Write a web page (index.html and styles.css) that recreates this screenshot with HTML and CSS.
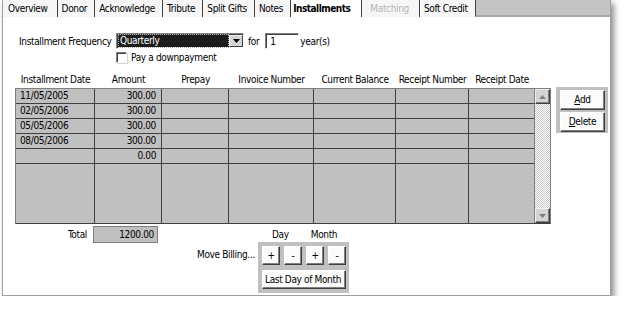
FILE: index.html
```html
<!DOCTYPE html>
<html>
<head>
<meta charset="utf-8">
<title>Installments</title>
<link rel="stylesheet" href="styles.css">
</head>
<body>
<div class="window">
  <div class="tabs">
    <div class="tab">Overview</div>
    <div class="tab">Donor</div>
    <div class="tab">Acknowledge</div>
    <div class="tab">Tribute</div>
    <div class="tab">Split Gifts</div>
    <div class="tab">Notes</div>
    <div class="tab active">Installments</div>
    <div class="tab disabled">Matching</div>
    <div class="tab">Soft Credit</div>
    <div class="tab-fill"></div>
  </div>
  <div class="content">
    <div class="freq-row">
      <span class="freq-label">Installment Frequency</span>
      <div class="select">
        <span class="select-val"><span class="focus">Quarterly</span></span>
        <span class="select-btn"><svg width="7" height="4" viewBox="0 0 7 4"><path d="M0 0h7L3.5 4z" fill="#000"/></svg></span>
      </div>
      <span class="for-label">for</span>
      <div class="textbox">1</div>
      <span>year(s)</span>
    </div>
    <div class="check-row">
      <span class="checkbox"></span>
      <span>Pay a downpayment</span>
    </div>
    <div class="grid-area">
      <div class="grid-col">
        <div class="grid-head">
          <span>Installment Date</span>
          <span>Amount</span>
          <span>Prepay</span>
          <span>Invoice Number</span>
          <span>Current Balance</span>
          <span>Receipt Number</span>
          <span>Receipt Date</span>
        </div>
        <div class="grid">
          <div class="cells">
            <div class="c date">11/05/2005</div><div class="c num">300.00</div><div class="c"></div><div class="c"></div><div class="c"></div><div class="c"></div><div class="c last"></div>
            <div class="c date">02/05/2006</div><div class="c num">300.00</div><div class="c"></div><div class="c"></div><div class="c"></div><div class="c"></div><div class="c last"></div>
            <div class="c date">05/05/2006</div><div class="c num">300.00</div><div class="c"></div><div class="c"></div><div class="c"></div><div class="c"></div><div class="c last"></div>
            <div class="c date">08/05/2006</div><div class="c num">300.00</div><div class="c"></div><div class="c"></div><div class="c"></div><div class="c"></div><div class="c last"></div>
            <div class="c date"></div><div class="c num">0.00</div><div class="c"></div><div class="c"></div><div class="c"></div><div class="c"></div><div class="c last"></div>
            <div class="c fill"></div><div class="c fill"></div><div class="c fill"></div><div class="c fill"></div><div class="c fill"></div><div class="c fill"></div><div class="c fill last"></div>
          </div>
          <div class="scrollbar">
            <span class="sb-btn"><svg width="7" height="4" viewBox="0 0 7 4"><path d="M3.5 0L7 4H0z" fill="#808080"/></svg></span>
            <span class="sb-track"></span>
            <span class="sb-btn"><svg width="7" height="4" viewBox="0 0 7 4"><path d="M0 0h7L3.5 4z" fill="#808080"/></svg></span>
          </div>
        </div>
      </div>
      <div class="side-panel">
        <button class="btn side-btn"><u>A</u>dd</button>
        <button class="btn side-btn"><u>D</u>elete</button>
      </div>
    </div>
    <div class="bottom">
      <div class="total">
        <span class="total-label">Total</span>
        <div class="total-box">1200.00</div>
      </div>
      <div class="billing">
        <span class="billing-label">Move Billing...</span>
        <div class="billing-col">
          <div class="billing-heads"><span>Day</span><span>Month</span></div>
          <div class="billing-panel">
            <div class="pm-row">
              <button class="btn pm">+</button>
              <button class="btn pm">-</button>
              <button class="btn pm">+</button>
              <button class="btn pm">-</button>
            </div>
            <button class="btn last-day">Last Day of Month</button>
          </div>
        </div>
      </div>
    </div>
  </div>
</div>
</body>
</html>
```
FILE: styles.css
```css
* { box-sizing: border-box; }
body {
  margin: 0;
  background: #fff;
  font-family: "DejaVu Sans Condensed", "DejaVu Sans", sans-serif;
  font-size: 10px;
  letter-spacing: -0.35px;
  color: #000;
  white-space: nowrap;
}
.window {
  margin-left: 2px;
  width: 609px;
  height: 296px;
  border-left: 1px solid #a0a0a0;
  border-right: 1px solid #a0a0a0;
  border-bottom: 1px solid #a0a0a0;
  background: #fff;
  box-shadow: 3px 3px 6px rgba(0,0,0,0.45);
}
.tabs {
  display: flex;
  height: 17px;
}
.tab {
  background: #f6f6f6;
  border-left: 1px solid #404040;
  padding: 3px 7px 0 4px;
  line-height: 12px;
}
.tab:first-child { border-left: none; padding-left: 5px; padding-right: 9px; }
.tab.active { font-weight: bold; background: #fff; padding-left: 2px; padding-right: 11px; letter-spacing: -0.5px; }
.tab.disabled { color: #b4b4b4; padding-left: 8px; padding-right: 10px; }
.tab-fill {
  flex: 1;
  background: #c3c3c3;
  border-left: 1px solid #404040;
  border-bottom: 2px solid #a8a8a8;
}
.content { padding: 16px 0 0 12px; }
.freq-row {
  display: flex;
  align-items: center;
  margin-left: 4px;
  height: 16px;
}
.freq-label { width: 97px; }
.select {
  display: flex;
  width: 128px;
  height: 16px;
  border: 1px solid;
  border-color: #808080 #fff #fff #808080;
  box-shadow: inset 1px 1px #404040;
  background: #fff;
}
.select-val {
  flex: 1;
  background: #1c1c1c;
  margin: 1px 0 1px 1px;
  padding: 0 1px;
  color: #fff;
  line-height: 12px;
}
.focus {
  display: block;
  outline: 1px dotted #aaa;
  outline-offset: 0;
  padding-left: 1px;
}
.select-btn {
  width: 14px;
  margin: 1px 0 1px 0;
  background: #d4d4d4;
  border: 1px solid;
  border-color: #f0f0f0 #404040 #404040 #f0f0f0;
  display: flex;
  align-items: center;
  justify-content: center;
}
.for-label { margin: 0 6px 0 4px; }
.textbox {
  width: 34px;
  height: 16px;
  border: 1px solid;
  border-color: #808080 #fff #fff #808080;
  box-shadow: inset 1px 1px #404040;
  padding: 2px 0 0 4px;
  line-height: 12px;
  margin-right: 1px;
}
.check-row {
  display: flex;
  align-items: center;
  margin: 2px 0 0 101px;
  height: 12px;
}
.checkbox {
  width: 11px;
  height: 11px;
  border: 1px solid;
  border-color: #808080 #fff #fff #808080;
  box-shadow: inset 1px 1px #404040, 1px 1px #d4d4d4;
  background: #fff;
  margin-right: 4px;
}
.grid-area {
  display: flex;
  align-items: flex-start;
  margin-top: 11px;
}
.grid-head {
  display: grid;
  grid-template-columns: 79px 67px 67px 85px 82px 73px 66px;
  height: 14px;
  line-height: 12px;
  padding-left: 1px;
}
.grid-head span { text-align: center; }
.grid {
  display: flex;
  width: 536px;
  height: 136px;
  border: 1px solid #808080;
  border-bottom-color: #404040;
}
.cells {
  flex: 1;
  display: grid;
  grid-template-columns: 79px 67px 67px 85px 82px 73px 66px;
  grid-template-rows: repeat(5, 15px) 1fr;
  background: #c0c0c0;
}
.c {
  border-right: 1px solid #404040;
  border-bottom: 1px solid #404040;
  line-height: 14px;
  padding: 0 4px;
}
.c.last { border-right-color: #808080; }
.c.fill { border-bottom: none; }
.c.num { text-align: right; padding-right: 5px; }
.scrollbar {
  width: 15px;
  display: flex;
  flex-direction: column;
}
.sb-btn {
  height: 15px;
  background: #d4d4d4;
  border: 1px solid;
  border-color: #f0f0f0 #404040 #404040 #f0f0f0;
  box-shadow: inset -1px -1px #808080;
  display: flex;
  align-items: center;
  justify-content: center;
}
.sb-track {
  flex: 1;
  background: repeating-conic-gradient(#c8c8c8 0 25%, #fff 0 50%) 0 0 / 2px 2px;
}
.side-panel {
  display: flex;
  flex-direction: column;
  gap: 2px;
  background: #c0c0c0;
  padding: 3px 3px 1px 4px;
  margin: 13px 0 0 5px;
  width: 52px;
}
.btn {
  font: inherit;
  letter-spacing: inherit;
  color: #000;
  background: #fbfbfb;
  border: 1px solid;
  border-color: #fff #404040 #404040 #fff;
  box-shadow: inset -1px -1px #808080;
  padding: 0;
  margin: 0;
  line-height: 12px;
}
.side-btn { width: 45px; height: 20px; }
.bottom {
  display: flex;
  align-items: flex-start;
  margin-top: 2px;
}
.total { display: flex; align-items: center; }
.total-label { width: 72px; text-align: right; margin-right: 6px; }
.total-box {
  width: 65px;
  height: 17px;
  background: #c0c0c0;
  border: 1px solid #808080;
  text-align: right;
  padding: 2px 3px 0 0;
  line-height: 12px;
}
.billing { display: flex; align-items: flex-start; margin-left: 39px; }
.billing-label { margin-top: 23px; width: 61px; line-height: 12px; }
.billing-col { display: flex; flex-direction: column; }
.billing-heads {
  display: flex;
  height: 16px;
  align-items: center;
  padding-left: 14px;
  gap: 22px;
}
.billing-panel {
  background: #c0c0c0;
  width: 91px;
  padding: 4px 3px 4px 4px;
  display: flex;
  flex-direction: column;
  gap: 5px;
}
.pm-row { display: flex; gap: 4px; }
.pm { width: 18px; height: 19px; }
.last-day { width: 84px; height: 19px; text-align: left; padding-left: 2px; }
```
